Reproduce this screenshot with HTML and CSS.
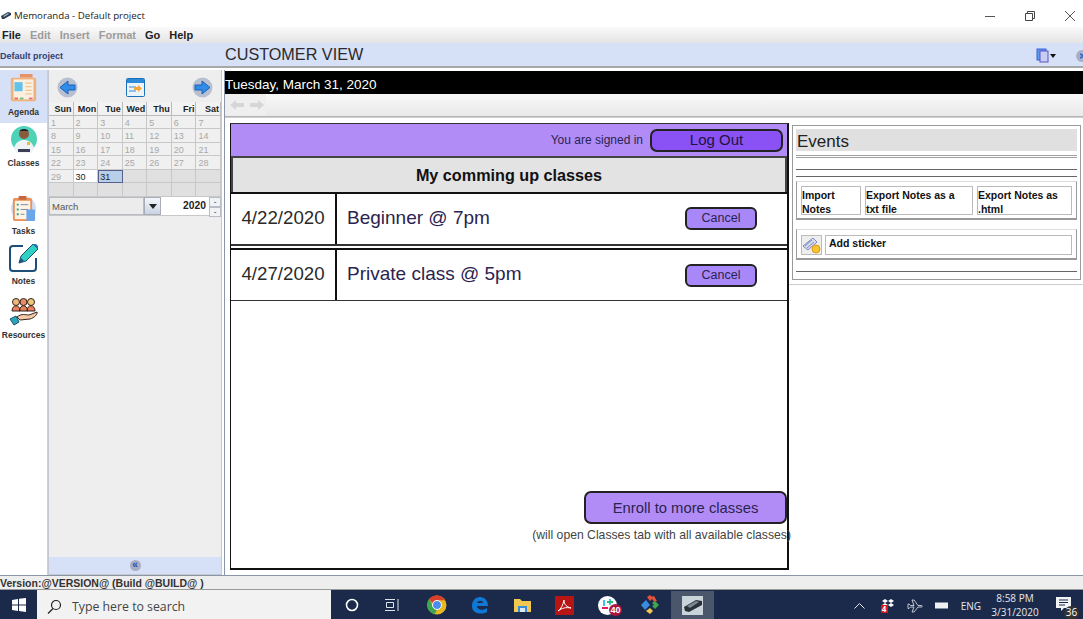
FILE: index.html
```html
<!DOCTYPE html>
<html>

<head>
	<meta charset="utf-8">
	<title>Memoranda - Default project</title>
	<link rel="stylesheet" href="styles.css">
</head>

<body>
	<div class="titlebar">
		<svg class="app-icon" width="10" height="9" viewBox="0 0 10 9"><path d="M0 5 7 1l3 1v2L3 8H1z" fill="#2b3b4d"/><path d="M2 5l5-3 1 1-5 3z" fill="#9fb2c4"/></svg>
		<span class="title-text">Memoranda - Default project</span>
		<div class="winbtns">
			<svg width="12" height="12" viewBox="0 0 12 12"><path d="M1 6.500h10" stroke="#555" fill="none"/></svg>
			<svg width="12" height="12" viewBox="0 0 12 12"><path d="M1.500 3.500h7v7h-7zM3.500 3.500v-2h7v7h-2" stroke="#444" fill="none"/></svg>
			<svg width="12" height="12" viewBox="0 0 12 12"><path d="M1 1l10 10M11 1 1 11" stroke="#555" fill="none"/></svg>
		</div>
	</div>

	<div class="menubar">
		<span>File</span>
		<span class="off">Edit</span>
		<span class="off">Insert</span>
		<span class="off">Format</span>
		<span>Go</span>
		<span>Help</span>
	</div>

	<div class="projectbar">
		<span class="project-name">Default project</span>
		<span class="view-title">CUSTOMER VIEW</span>
		<svg class="doc-icon" width="21" height="15" viewBox="0 0 21 15">
			<rect x="1" y="1" width="9" height="11" fill="#5d9bf0" stroke="#3a62d8"/>
			<rect x="4" y="3" width="8" height="11" fill="#c8cdf5" stroke="#5a55c0"/>
			<path d="M14 6h6l-3 4z" fill="#111"/>
		</svg>
		<svg class="globe-icon" width="10" height="14" viewBox="0 0 10 14">
			<circle cx="7" cy="7" r="6" fill="#aab0c4"/>
			<path d="M5 5l4 2-4 2" stroke="#2a5ad0" stroke-width="1.500" fill="none"/>
		</svg>
	</div>

	<div class="workspace">
		<nav class="sidebar">
			<div class="side-item active">
				<svg width="29" height="29" viewBox="0 0 32 32">
					<rect x="12" y="0" width="14" height="4" fill="#e8926a"/>
					<rect x="2" y="4" width="28" height="26" rx="2" fill="#f0b27a"/>
					<rect x="5" y="6" width="22" height="22" fill="#fbefe0"/>
					<rect x="6" y="9" width="9" height="10" fill="#62c3ea"/>
					<path d="M18 10h7M18 14h7M18 18h7M18 22h7" stroke="#e9b776"/>
					<path d="M6 27h4" stroke="#e86a5a" stroke-width="2"/>
					<path d="M12 27h4" stroke="#6cc07c" stroke-width="2"/>
					<path d="M22 27h4" stroke="#e86a9a" stroke-width="2"/>
				</svg>
				<span>Agenda</span>
			</div>
			<div class="side-item classes">
				<svg width="28" height="30" viewBox="0 0 28 30">
					<circle cx="14" cy="14" r="13" fill="#4fd3b8"/>
					<path d="M4 24c1-7 6-9 10-9s9 2 10 9l-3 4H7z" fill="#eef3f7"/>
					<circle cx="14" cy="9" r="5" fill="#8a5a3c"/>
					<path d="M9 7c1-4 9-4 10 0l-1-1H10z" fill="#22222e"/>
					<path d="M8 24h12v3H8z" fill="#3a3f55"/>
					<rect x="17" y="17" width="3" height="3" fill="#f2b632"/>
				</svg>
				<span>Classes</span>
			</div>
			<div class="side-item tasks">
				<svg width="27" height="27" viewBox="0 0 28 28">
					<circle cx="14" cy="14" r="13" fill="#cfe0fa"/>
					<rect x="3" y="3" width="20" height="24" rx="2" fill="#e9925a"/>
					<rect x="5" y="6" width="16" height="19" fill="#fdf4e6"/>
					<rect x="9" y="1" width="8" height="4" fill="#c8663e"/>
					<path d="M7 10h2M7 15h2M7 20h2" stroke="#2aa27c" stroke-width="2"/>
					<path d="M11 10h8M11 15h8M11 20h4" stroke="#7d8aa0"/>
					<rect x="17" y="15" width="9" height="12" rx="1" fill="#6aa6ea"/>
				</svg>
				<span>Tasks</span>
			</div>
			<div class="side-item notes">
				<svg width="30" height="29" viewBox="0 0 30 29">
					<path d="M14 3H4a3 3 0 0 0-3 3v19a3 3 0 0 0 3 3h20a3 3 0 0 0 3-3V15" fill="none" stroke="#1f4f78" stroke-width="2"/>
					<path d="M10 20l2-7L24 1l5 5-12 12z" fill="#2fd0c4" stroke="#1f4f78"/>
					<path d="M24 1l5 5 0-3-2-2z" fill="#2f74b8"/>
					<path d="M10 20l2-5 3 3z" fill="#1f4f78"/>
				</svg>
				<span>Notes</span>
			</div>
			<div class="side-item resources">
				<svg width="29" height="29" viewBox="0 0 29 29">
					<circle cx="7" cy="5" r="3.500" fill="#f0b87c" stroke="#33241c"/>
					<circle cx="14.500" cy="5" r="3.500" fill="#ea8a6a" stroke="#33241c"/>
					<circle cx="22" cy="5" r="3.500" fill="#f0c87c" stroke="#33241c"/>
					<path d="M3 14c0-7 8-7 8 0zM10.500 14c0-7 8-7 8 0zM18 14c0-7 8-7 8 0z" fill="#e8805a" stroke="#33241c"/>
					<path d="M8 20c5-4 8-2 12-2l8-3c1 2-3 6-7 7l-10 1z" fill="#f6c9a8" stroke="#33241c"/>
					<path d="M1 22l6-3 3 6-5 3z" fill="#2aa6b8" stroke="#1f4f78"/>
				</svg>
				<span>Resources</span>
			</div>
		</nav>

		<aside class="calendar">
			<div class="cal-nav">
				<svg width="21" height="21" viewBox="0 0 21 21">
					<circle cx="10.500" cy="10.500" r="10" fill="#b8c0d0"/>
					<path d="M3 10.500 11 4v4h7v5h-7v4z" fill="#2f8de8" stroke="#1b5fb8"/>
				</svg>
				<svg width="19" height="19" viewBox="0 0 19 19">
					<rect x="0.500" y="0.500" width="18" height="18" rx="1" fill="#eaf3fb" stroke="#1d6fb8"/>
					<rect x="1" y="1" width="17" height="4" fill="#2a8cd8"/>
					<path d="M3 8h7v2H3zM3 12h7v2H3z" fill="#8cc0ea"/>
					<path d="M8 9h4V7l4 3.500-4 3.500v-2H8z" fill="#f2a83a"/>
				</svg>
				<svg width="21" height="21" viewBox="0 0 21 21">
					<circle cx="10.500" cy="10.500" r="10" fill="#b8c0d0"/>
					<path d="M18 10.500 10 4v4H3v5h7v4z" fill="#2f8de8" stroke="#1b5fb8"/>
				</svg>
			</div>
			<div class="cal-grid">
				<div class="dow">Sun</div><div class="dow">Mon</div><div class="dow">Tue</div><div class="dow">Wed</div><div class="dow">Thu</div><div class="dow">Fri</div><div class="dow">Sat</div>
				<div class="day">1</div><div class="day">2</div><div class="day">3</div><div class="day">4</div><div class="day">5</div><div class="day">6</div><div class="day">7</div>
				<div class="day">8</div><div class="day">9</div><div class="day">10</div><div class="day">11</div><div class="day">12</div><div class="day">13</div><div class="day">14</div>
				<div class="day">15</div><div class="day">16</div><div class="day">17</div><div class="day">18</div><div class="day">19</div><div class="day">20</div><div class="day">21</div>
				<div class="day">22</div><div class="day">23</div><div class="day">24</div><div class="day">25</div><div class="day">26</div><div class="day">27</div><div class="day">28</div>
				<div class="day">29</div><div class="day now">30</div><div class="day sel">31</div><div class="day none"></div><div class="day none"></div><div class="day none"></div><div class="day none"></div>
				<div class="day none"></div><div class="day none"></div><div class="day none"></div><div class="day none"></div><div class="day none"></div><div class="day none"></div><div class="day none"></div>
			</div>
			<div class="cal-pick">
				<div class="month">March</div>
				<div class="month-arrow"></div>
				<div class="year">2020</div>
				<div class="spin"><span>-</span><span>-</span></div>
			</div>
			<div class="cal-space"></div>
			<div class="cal-collapse">
				<span class="collapse-dot">«</span>
			</div>
		</aside>

		<main class="content">
			<div class="datebar"><span>Tuesday, March 31, 2020</span></div>
			<div class="toolbar">
				<div class="tool-arrows">
					<svg width="14" height="12" viewBox="0 0 14 12"><path d="M0 6l6-5v3h8v4H6v3z" fill="#d6d6d6"/></svg>
					<svg width="14" height="12" viewBox="0 0 14 12"><path d="M14 6 8 1v3H0v4h8v3z" fill="#d6d6d6"/></svg>
				</div>
			</div>
			<div class="pages">
				<section class="customer">
					<header class="signin">
						<span class="signin-text">You are signed in</span>
						<button class="logout">Log Out</button>
					</header>
					<h2 class="classes-title">My comming up classes</h2>
					<div class="class-row">
						<div class="class-date">4/22/2020</div>
						<div class="class-name">Beginner @ 7pm</div>
						<button class="btn-cancel">Cancel</button>
					</div>
					<div class="class-row second">
						<div class="class-date">4/27/2020</div>
						<div class="class-name">Private class @ 5pm</div>
						<button class="btn-cancel">Cancel</button>
					</div>
					<div class="enroll">
						<button class="btn-enroll">Enroll to more classes</button>
						<div class="enroll-note">(will open Classes tab with all available classes)</div>
					</div>
				</section>
				<div class="events-col">
					<section class="events">
						<div class="events-head">Events</div>
						<div class="rule double"></div>
						<div class="rule dark first"></div>
						<div class="rule dark"></div>
						<div class="export-box">
							<div class="export-btn w1">Import Notes</div>
							<div class="export-btn w2">Export Notes as a<br>txt file</div>
							<div class="export-btn w3">Export Notes as .html</div>
						</div>
						<div class="sticker-box">
							<svg class="sticker-icon" width="21" height="20" viewBox="0 0 21 20">
								<rect x="0.500" y="0.500" width="20" height="19" fill="#eee" stroke="#bbb"/>
								<path d="M2 11 12 3l4 4-9 8z" fill="#d8dcf0" stroke="#8088b8"/>
								<path d="M4 11l7-6M6 13l7-6" stroke="#8088b8"/>
								<circle cx="15" cy="14" r="4" fill="#f6c42c" stroke="#e09a18"/>
							</svg>
							<div class="sticker-field">Add sticker</div>
						</div>
						<div class="rule dark last"></div>
					</section>
					<div class="events-end"></div>
				</div>
			</div>
		</main>
	</div>

	<div class="statusbar">Version:@VERSION@ (Build @BUILD@ )</div>

	<footer class="taskbar">
		<div class="start">
			<svg width="14" height="14" viewBox="0 0 14 14"><path d="M0 2l6-1v5.500H0zM7 .8 14 0v6.500H7zM0 7.500h6V13l-6-1zM7 7.500h7V14l-7-1z" fill="#fff"/></svg>
		</div>
		<div class="search">
			<svg width="15" height="15" viewBox="0 0 15 15"><circle cx="9" cy="6" r="4.500" fill="none" stroke="#222" stroke-width="1.200"/><path d="M6 9.500 1 14.500" stroke="#222" stroke-width="1.200"/></svg>
			<span>Type here to search</span>
		</div>
		<div class="task-icons">
			<div class="task-icon"><svg width="14" height="14" viewBox="0 0 14 14"><circle cx="7" cy="7" r="5.500" fill="none" stroke="#fff" stroke-width="1.600"/></svg></div>
			<div class="task-icon"><svg class="snap" width="16" height="14" viewBox="0 0 16 14"><path d="M1 1.500h10M1 12.500h10M2.500 4.500h7v5h-7zM14 1v12" fill="none" stroke="#dfe3ea"/></svg></div>
			<div class="task-icon"><svg width="20" height="20" viewBox="0 0 20 20"><circle cx="10" cy="10" r="9.500" fill="#e8b820"/><path d="M10 .5a9.500 9.500 0 0 1 8.200 4.700H10a5 5 0 0 0-4.500 3L2 4A9.500 9.500 0 0 1 10 .5z" fill="#d8402c"/><path d="M2 4l4 7 4 4-2.500 4.200A9.500 9.500 0 0 1 2 4z" fill="#3ea650"/><circle cx="10" cy="10" r="4.500" fill="#4a8cf0" stroke="#fff"/></svg></div>
			<div class="task-icon"><svg width="18" height="19" viewBox="0 0 18 19"><path d="M9 1c5 0 8 4 8 9H6c0 4 6 5 10 2v4c-6 3-15 2-15-6C1 5 4 1 9 1zm3 6c0-3-5-3-6 0z" fill="#0e78d4"/></svg></div>
			<div class="task-icon"><svg width="19" height="15" viewBox="0 0 19 15"><path d="M1 1h6l2 2h9v11H1z" fill="#f2c850"/><path d="M5 8h9v6H5z" fill="#3a8cd8"/><path d="M7 10h5v4H7z" fill="#dfe8f0"/></svg></div>
			<div class="task-icon"><svg width="19" height="19" viewBox="0 0 19 19"><rect width="19" height="19" fill="#b81414"/><path d="M3 15c3-2 5-6 6-11 0 5 3 7 7 8-5-1-9 0-13 3z" fill="none" stroke="#fff"/></svg></div>
			<div class="task-icon slack">
				<svg width="19" height="19" viewBox="0 0 19 19"><circle cx="9.500" cy="9.500" r="9.500" fill="#fff"/><path d="M6 4v6M12 3v6" stroke="#36c5f0" stroke-width="2"/><path d="M4 12h6" stroke="#e01e5a" stroke-width="2"/><path d="M9 6h6" stroke="#2eb67d" stroke-width="2"/></svg>
				<span class="slack-badge">40</span>
			</div>
			<div class="task-icon"><svg width="20" height="20" viewBox="0 0 20 20"><path d="M7 2l3-2 3 3-3 3z" fill="#e8503c"/><path d="M11 2l3-1 3 5-3 1z" fill="#e8503c"/><path d="M1 10l5-5 4 5-5 5z" fill="#3a8ce0"/><path d="M12 8l3-2 4 4-4 4-3-3 2-1z" fill="#3ea650"/><path d="M10 13l3 3-3 3-4-3z" fill="#f2c850"/></svg></div>
			<div class="task-icon active"><svg width="21" height="19" viewBox="0 0 21 19"><rect width="21" height="19" fill="#c8d4da"/><path d="M2 11 14 4l6 1v4L7 16l-4-1z" fill="#2b3038"/><path d="M5 10 14 5l3 1-9 6z" fill="#7a8894"/></svg></div>
		</div>
		<div class="tray">
			<svg class="tray-up" width="11" height="6" viewBox="0 0 11 6"><path d="M.5 5.500l5-5 5 5" fill="none" stroke="#e6e8ee"/></svg>
			<div class="tray-box">
				<svg width="14" height="13" viewBox="0 0 14 13"><path d="M1 2l3-2 3 2-3 2zM7 2l3-2 3 2-3 2zM1 6l3-2 3 2-3 2zM7 6l3-2 3 2-3 2z" fill="#fff"/></svg>
				<span class="tray-badge">4</span>
			</div>
			<svg class="tray-plane" width="16" height="14" viewBox="0 0 16 14"><path d="M1 5h1l1.500 1.500H7L5 1h2l4 5.500h3.500c1 0 1 1.500 0 1.500H11l-4 5H5l2-5H3.500L2 9.500H1z" fill="none" stroke="#e6e8ee" stroke-width=".8"/></svg>
			<svg class="tray-bat" width="14" height="7" viewBox="0 0 14 7"><rect x="0" y="0.500" width="13" height="6" fill="#eef0f4"/></svg>
			<span class="tray-lang">ENG</span>
			<div class="clock"><span>8:58 PM</span><span>3/31/2020</span></div>
			<div class="notify">
				<svg width="15" height="14" viewBox="0 0 15 14"><path d="M0 0h15v11H8l-3 3v-3H0z" fill="#f2f3f5"/><path d="M3 3h9M3 5.500h9M3 8h6" stroke="#1b2a4a"/></svg>
				<span class="notify-badge">36</span>
			</div>
		</div>
	</footer>
</body>

</html>
```

FILE: styles.css
```css
html,
body {
	margin: 0;
	height: 100%;
	overflow: hidden;
}

body {
	width: 1083px;
	height: 619px;
	display: flex;
	flex-direction: column;
	background: #fff;
	color: #222;
	font-family: "Liberation Sans", Arial, sans-serif;
}

svg {
	display: block;
	flex: none;
}

button {
	font-family: inherit;
	cursor: pointer;
}

/* window chrome */
.titlebar {
	height: 27px;
	flex: none;
	display: flex;
	align-items: center;
	padding-top: 4px;
	box-sizing: border-box;
	background: #fff;
}

.app-icon {
	margin-left: 1px;
}

.title-text {
	margin-left: 3px;
	font: 9.700px "Open Sans", sans-serif;
	color: #222;
}

.winbtns {
	margin-left: auto;
	display: flex;
	gap: 28px;
	padding-right: 7px;
}

.menubar {
	height: 16px;
	flex: none;
	display: flex;
	gap: 9px;
	padding-left: 2px;
	align-items: center;
	font-size: 11px;
	font-weight: bold;
	color: #222;
	background: linear-gradient(#fafafa, #e4e4e4);
}

.menubar .off {
	color: #9c9c9c;
}

.projectbar {
	height: 25px;
	flex: none;
	display: flex;
	align-items: center;
	background: #d6e0f7;
	border-bottom: 2px solid #a8a8a8;
	box-sizing: border-box;
}

.project-name {
	width: 225px;
	padding-top: 3px;
	font-size: 9px;
	font-weight: bold;
	color: #35406e;
}

.view-title {
	font-size: 16.200px;
	color: #2b2b2b;
}

.doc-icon {
	margin-left: auto;
	margin-top: 2px;
	margin-right: 18px;
}

.globe-icon {
	margin-top: 2px;
	margin-right: -2px;
}

.workspace {
	height: 505px;
	flex: none;
	display: flex;
	margin-top: 2px;
}

/* left icons */
.sidebar {
	width: 47px;
	flex: none;
	display: flex;
	flex-direction: column;
	background: #fff;
	border-right: 1px solid #c8d0dc;
}

.side-item {
	display: flex;
	flex-direction: column;
	align-items: center;
	font-size: 8.500px;
	font-weight: bold;
	color: #333;
	gap: 4px;
}

.side-item.active {
	height: 53px;
	box-sizing: border-box;
	padding-top: 4px;
	background: #d6e0f7;
}

.side-item.classes {
	margin-top: 2px;
	gap: 3px;
}

.side-item.tasks {
	margin-top: 27px;
}

.side-item.notes {
	margin-top: 7px;
}

.side-item.resources {
	margin-top: 11px;
}

/* calendar */
.calendar {
	width: 174px;
	flex: none;
	display: flex;
	flex-direction: column;
	background: #eee;
	border: 1px solid #c4c8d0;
	border-top: 0;
	box-sizing: border-box;
}

.cal-nav {
	height: 32px;
	flex: none;
	display: flex;
	align-items: center;
	justify-content: space-between;
	padding: 3px 8px 0 8px;
	box-sizing: border-box;
}

.cal-grid {
	display: grid;
	grid-template-columns: repeat(7, 1fr);
	grid-auto-rows: 13.500px;
	font-size: 9px;
}

.dow {
	text-align: right;
	font-weight: bold;
	color: #222;
	padding: 2px 1px 0 0;
	background: #f2f2f2;
	border-right: 1px solid #bbb;
	border-bottom: 1px solid #bbb;
	box-sizing: border-box;
}

.day {
	padding: 2px 0 0 2px;
	color: #a8a8a8;
	background: #f0f0f0;
	border-right: 1px solid #c8c8c8;
	border-bottom: 1px solid #c8c8c8;
	box-sizing: border-box;
}

.day.now {
	background: #fff;
	color: #222;
}

.day.sel {
	background: #b8cfe8;
	color: #222;
	border: 1px solid #556090;
	padding: 1px 0 0 1px;
}

.day.none {
	background: #e0e0e0;
}

.cal-pick {
	height: 18px;
	flex: none;
	display: flex;
	border-bottom: 1px solid #c8c8c8;
	font-size: 9.500px;
}

.month {
	width: 95px;
	padding: 3px 0 0 2px;
	box-sizing: border-box;
	color: #555;
	background: #ececec;
	border: 1px solid #b8bcc4;
}

.month-arrow {
	width: 17px;
	position: relative;
	background: linear-gradient(#f4f7fb, #c8d4e4);
	border: 1px solid #a8acb4;
	box-sizing: border-box;
}

.month-arrow::after {
	content: "";
	position: absolute;
	left: 4px;
	top: 6px;
	border: 4px solid transparent;
	border-top: 5px solid #222;
}

.year {
	flex: 1;
	text-align: right;
	padding: 3px 3px 0 0;
	font-size: 10.300px;
	font-weight: bold;
	background: #fff;
}

.spin {
	width: 12px;
	display: flex;
	flex-direction: column;
	font-size: 8px;
	text-align: center;
	line-height: 8px;
}

.spin span {
	flex: 1;
	background: #f0f2f6;
	border: 1px solid #b8bcc4;
}

.cal-space {
	flex: 1;
}

.cal-collapse {
	height: 17px;
	flex: none;
	display: flex;
	align-items: center;
	justify-content: center;
	background: #d6e0f7;
}

.collapse-dot {
	width: 11px;
	height: 11px;
	border-radius: 50%;
	background: #a8aec0;
	color: #2a4ac0;
	font-size: 10px;
	font-weight: bold;
	line-height: 9px;
	text-align: center;
}

/* right side */
.content {
	flex: 1;
	min-width: 0;
	margin-left: 2px;
	border-left: 1px solid #8a96a8;
	display: flex;
	flex-direction: column;
}

.datebar {
	height: 23px;
	flex: none;
	display: flex;
	align-items: flex-end;
	padding-bottom: 1px;
	background: #000;
	color: #fff;
	font-size: 13.500px;
	line-height: 16px;
	box-sizing: border-box;
	margin-top: 1px;
}

.toolbar {
	height: 23px;
	flex: none;
	background: linear-gradient(#f8f8f8, #e9e9e9);
	border-bottom: 1px solid #b8b8b8;
	box-sizing: border-box;
}

.tool-arrows {
	width: 41px;
	height: 21px;
	display: flex;
	align-items: center;
	gap: 6px;
	padding-left: 5px;
	box-sizing: border-box;
	background: #efefef;
}

.pages {
	flex: 1;
	display: flex;
	align-items: flex-start;
	padding: 5px 0 0 5px;
	border-top: 1px solid #ccc;
	position: relative;
}

/* customer mockup */
.customer {
	width: 559px;
	height: 447px;
	flex: none;
	display: flex;
	flex-direction: column;
	box-sizing: border-box;
	border: 2px solid #111;
	border-top-color: #333;
	border-width: 1px 2px 2px 1px;
	background: #fff;
}

.signin {
	height: 34px;
	flex: none;
	display: flex;
	align-items: center;
	justify-content: flex-end;
	padding-right: 4px;
	background: #b18cf7;
	border-bottom: 2px solid #444;
	box-sizing: border-box;
}

.signin-text {
	font-size: 12px;
	color: #2b2350;
	margin-right: 7px;
}

.logout {
	width: 133px;
	height: 23px;
	padding: 0 0 3px;
	border: 2px solid #222;
	border-radius: 7px;
	background: #8a52f5;
	color: #1c1440;
	font-size: 15px;
}

.classes-title {
	height: 34px;
	flex: none;
	margin: 0;
	display: flex;
	align-items: center;
	justify-content: center;
	font-size: 16.200px;
	color: #111;
	background: #e3e3e3;
	border-left: 2px solid #444;
	border-right: 2px solid #444;
	box-sizing: border-box;
}

.class-row {
	height: 54px;
	flex: none;
	display: flex;
	align-items: center;
	box-sizing: border-box;
	border-top: 2px solid #111;
	border-bottom: 2px solid #333;
}

.class-row.second {
	height: 53px;
	margin-top: 2px;
	border-bottom-width: 1.500px;
}

.class-date {
	width: 106px;
	height: 100%;
	display: flex;
	align-items: center;
	justify-content: center;
	padding-bottom: 2px;
	box-sizing: border-box;
	border-right: 2px solid #111;
	font-size: 18.700px;
	color: #2a2a2a;
}

.class-name {
	flex: 1;
	padding: 0 0 2px 10px;
	font-size: 19px;
	color: #2b2350;
}

.btn-cancel {
	width: 72px;
	height: 23px;
	margin: 0 30px 2px 0;
	padding: 0;
	border: 2px solid #222;
	border-radius: 6px;
	background: #a888f8;
	color: #2b2350;
	font-size: 12.500px;
}

.class-row.second .btn-cancel {
	margin-bottom: 0;
}

.enroll {
	margin-top: auto;
	display: flex;
	flex-direction: column;
	align-items: flex-end;
	padding-bottom: 26px;
}

.btn-enroll {
	width: 203px;
	height: 33px;
	padding: 0;
	border: 2px solid #222;
	border-radius: 7px;
	background: #b18cf7;
	color: #2b2350;
	font-size: 14.800px;
}

.enroll-note {
	margin-top: 4px;
	margin-right: -4px;
	font-size: 12.200px;
	line-height: 14px;
	white-space: nowrap;
	color: #444;
}

/* events panel */
.events-col {
	flex: 1;
	min-width: 0;
	display: flex;
	flex-direction: column;
	margin-top: 2px;
}

.events {
	width: 289px;
	height: 155px;
	margin-left: 3px;
	padding: 3px;
	box-sizing: border-box;
	border: 1px solid #9a9a9a;
	background: #fff;
}

.events-head {
	height: 22px;
	padding-left: 1px;
	background: #e0e0e0;
	font-size: 17px;
	line-height: 25px;
	color: #222;
}

.rule {
	height: 0;
	border-top: 1px solid #666;
}

.rule.double {
	height: 1px;
	margin-top: 4px;
	border: 1px solid #a0a0a0;
	border-left: 0;
	border-right: 0;
}

.rule.dark.first {
	margin-top: 11px;
}

.rule.dark {
	margin-top: 6px;
}

.rule.dark.last {
	margin-top: 11px;
}

.export-box {
	height: 39px;
	margin-top: 4px;
	display: flex;
	gap: 4px;
	padding: 4px 4px 3px;
	box-sizing: border-box;
	border: 1px solid #999;
	border-top-color: #ddd;
	border-bottom-width: 2px;
}

.export-btn {
	box-sizing: border-box;
	padding: 1px 0 0 0;
	border: 1px solid #bbb;
	font-size: 10.500px;
	font-weight: bold;
	line-height: 14px;
	color: #111;
}

.export-btn.w1 {
	width: 60px;
}

.export-btn.w2 {
	width: 108px;
}

.export-btn.w3 {
	width: 95px;
}

.sticker-box {
	height: 31px;
	margin-top: 9px;
	display: flex;
	gap: 3px;
	padding: 5px 4px;
	box-sizing: border-box;
	border: 1px solid #999;
	border-top-color: #ddd;
	border-bottom-width: 2px;
}

.sticker-field {
	flex: 1;
	height: 20px;
	box-sizing: border-box;
	padding-left: 3px;
	border: 1px solid #bbb;
	font-size: 10.500px;
	font-weight: bold;
	line-height: 14px;
	color: #111;
}

.events-end {
	height: 4px;
	margin-left: 0;
	border-bottom: 1px solid #ccc;
}

/* bottom */
.statusbar {
	height: 14px;
	flex: none;
	box-sizing: border-box;
	padding-top: 2px;
	font-size: 10.500px;
	line-height: 11px;
	font-weight: bold;
	color: #333;
	background: #eee;
	border-top: 1px solid #8a96a8;
	margin-left: 0;
	white-space: nowrap;
}

.taskbar {
	height: 30px;
	flex: none;
	display: flex;
	align-items: stretch;
	background: #1b2a4a;
	color: #e6e8ee;
	border-top: 1px solid #9a9a9a;
	box-sizing: border-box;
}

.start {
	width: 37px;
	display: flex;
	align-items: center;
	justify-content: center;
	flex: none;
}

.search {
	width: 294px;
	flex: none;
	display: flex;
	align-items: center;
	gap: 10px;
	padding: 3px 0 0 10px;
	box-sizing: border-box;
	background: #f2f2f2;
	color: #444;
	font: 12.300px "Open Sans", sans-serif;
}

.task-icons {
	display: flex;
	padding-top: 1px;
	margin-left: 0;
}

.task-icon {
	width: 42.500px;
	flex: none;
	display: flex;
	align-items: center;
	justify-content: center;
	position: relative;
}

.snap {
	margin-right: 6px;
}

.task-icon.active {
	background: #4a566c;
}

.slack-badge {
	position: absolute;
	left: 23px;
	top: 13px;
	width: 13px;
	height: 12px;
	border-radius: 50%;
	background: #b0143c;
	color: #fff;
	font-size: 9px;
	font-weight: bold;
	line-height: 12px;
	text-align: center;
}

.tray {
	margin-left: auto;
	display: flex;
	align-items: center;
	padding-top: 2px;
	font: 10px "Open Sans", sans-serif;
}

.tray-up {
	margin-right: 16px;
}

.tray-box {
	position: relative;
	margin-right: 12px;
}

.tray-badge {
	position: absolute;
	left: 0;
	top: 6px;
	width: 7px;
	height: 8px;
	background: #d81818;
	color: #fff;
	font-size: 8px;
	font-weight: bold;
	line-height: 8px;
	text-align: center;
}

.tray-plane {
	margin-right: 12px;
}

.tray-bat {
	margin-right: 12px;
}

.tray-lang {
	margin-right: 5px;
}

.clock {
	width: 58px;
	display: flex;
	flex-direction: column;
	align-items: center;
	gap: 3px;
	line-height: 11px;
	margin-right: 12px;
}

.notify {
	position: relative;
	width: 24px;
	height: 24px;
	margin-right: 3px;
}

.notify svg {
	margin-top: 3px;
}

.notify-badge {
	position: absolute;
	left: 8px;
	top: 12px;
	width: 15px;
	height: 14px;
	border-radius: 50%;
	background: #333;
	color: #fff;
	font-size: 10px;
	line-height: 13px;
	text-align: center;
}
```
